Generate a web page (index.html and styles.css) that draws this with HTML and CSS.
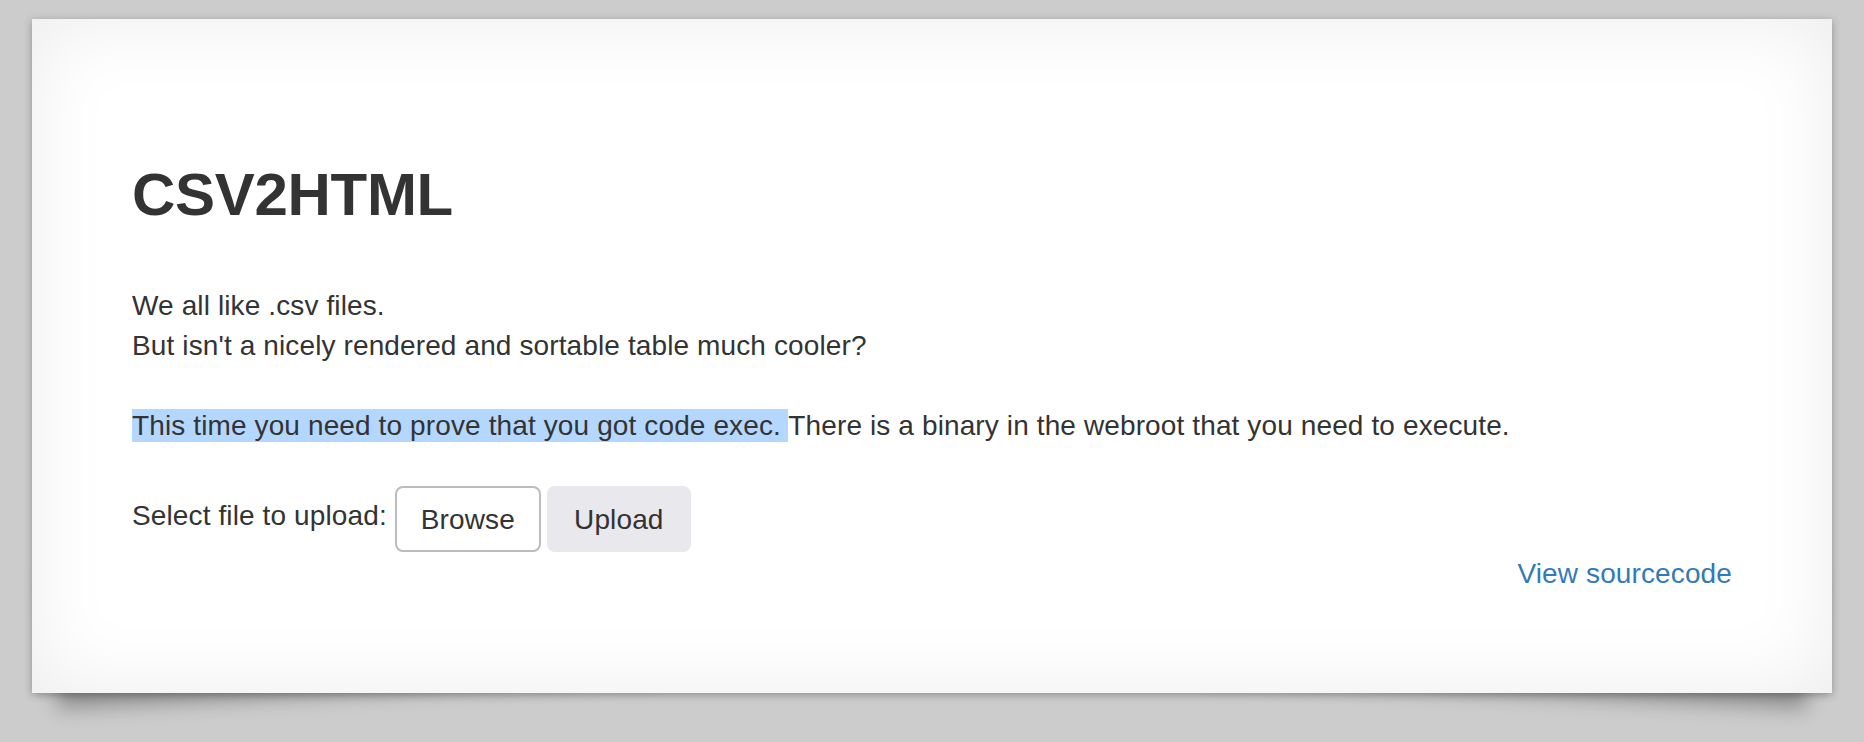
FILE: index.html
```html
<!DOCTYPE html>
<html>
<head>
<meta charset="utf-8">
<title>CSV2HTML</title>
<link rel="stylesheet" href="styles.css">
</head>
<body>
<div class="card lifted">
  <h2 class="title">CSV2HTML</h2>
  <p class="intro">We all like .csv files.<br>But isn't a nicely rendered and sortable table much cooler?<br><br><span class="sel">This time you need to prove that you got code exec. </span>There is a binary in the webroot that you need to execute.</p>
  <form class="upload-row">
    <span class="label">Select file to upload:</span>
    <span class="btn btn-browse">Browse</span>
    <span class="btn btn-upload">Upload</span>
  </form>
  <div class="source"><a href="#" class="source-link">View sourcecode</a></div>
</div>
</body>
</html>
```

FILE: styles.css
```css
html, body {
  margin: 0;
  padding: 0;
}
body {
  background: #cccccc;
  font-family: "Liberation Sans", Arial, Helvetica, sans-serif;
  font-size: 28px;
  line-height: 40px;
  letter-spacing: 0.12px;
  color: #333333;
  padding: 19px 32px 49px;
}
.card {
  position: relative;
  background: #ffffff;
  height: 674px;
  box-sizing: border-box;
  padding: 103px 100px 0;
  box-shadow: 0 2px 8px rgba(0, 0, 0, 0.3), 0 0 80px rgba(0, 0, 0, 0.08) inset;
}
.lifted::before,
.lifted::after {
  content: "";
  position: absolute;
  z-index: -2;
  bottom: 30px;
  left: 20px;
  width: 50%;
  height: 20%;
  max-width: 600px;
  box-shadow: 0 30px 20px rgba(0, 0, 0, 0.3);
  transform: rotate(-3deg);
}
.lifted::after {
  left: auto;
  right: 20px;
  transform: rotate(3deg);
}
.title {
  margin: 40px 0 58px;
  font-size: 60px;
  line-height: 66px;
  font-weight: 700;
  letter-spacing: -0.3px;
  color: #333333;
}
.intro {
  margin: 0 0 40px;
}
.sel {
  background: #b4d7ff;
  padding: 1px 0;
}
.upload-row {
  display: flex;
  align-items: flex-start;
  margin: 0;
}
.label {
  margin-top: 10px;
  margin-right: 8px;
}
.btn {
  box-sizing: border-box;
  height: 66px;
  border-radius: 8px;
  padding: 12px 0;
  text-align: center;
}
.btn-browse {
  width: 146px;
  background: #ffffff;
  border: 2px solid #bcbcbc;
  margin-right: 6px;
}
.btn-upload {
  width: 144px;
  background: #e8e8ed;
  border: 2px solid #e8e8ed;
}
.source {
  text-align: right;
  margin-top: 2px;
}
.source-link {
  color: #337ab7;
  text-decoration: none;
}
```
